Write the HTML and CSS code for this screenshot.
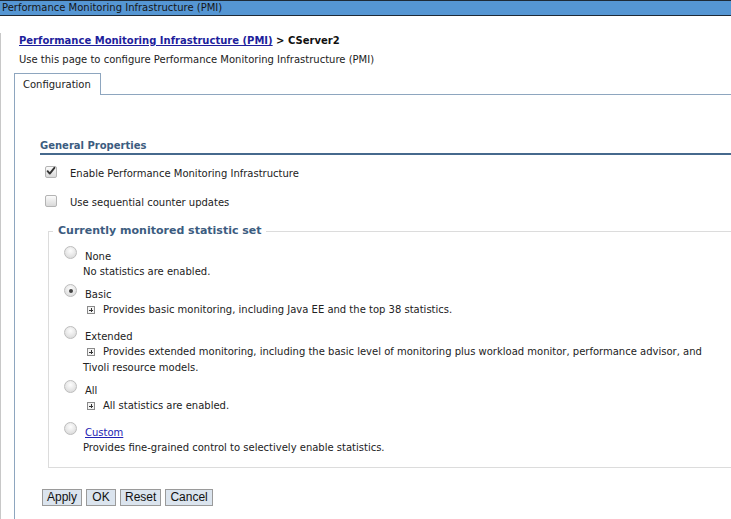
FILE: index.html
```html
<!DOCTYPE html>
<html>
<head>
<meta charset="utf-8">
<link rel="stylesheet" href="styles.css">
</head>
<body>
<div class="titlebar">Performance Monitoring Infrastructure (PMI)</div>
<div class="main">
  <div class="crumb"><a href="#" class="crumb-link">Performance Monitoring Infrastructure (PMI)</a> &gt; CServer2</div>
  <div class="intro">Use this page to configure Performance Monitoring Infrastructure (PMI)</div>
  <div class="tabs">
    <div class="tab">Configuration</div>
    <div class="tabfill"></div>
  </div>
  <div class="panel">
    <div class="section-title">General Properties</div>
    <div class="cbrow"><span class="cb"><svg class="check" viewBox="0 0 12 12" width="12" height="12"><path d="M2.6 6.2 L4.8 8.6 L9.4 2.8" fill="none" stroke="#333" stroke-width="1.9" stroke-linecap="round" stroke-linejoin="round"/></svg></span><span class="cblabel">Enable Performance Monitoring Infrastructure</span></div>
    <div class="cbrow second"><span class="cb"></span><span class="cblabel">Use sequential counter updates</span></div>
    <fieldset class="set">
      <legend class="legend">Currently monitored statistic set</legend>
      <div class="opt first">
        <div class="opt-head"><span class="radio"></span><span class="optlabel">None</span></div>
        <div class="opt-desc">No statistics are enabled.</div>
      </div>
      <div class="opt">
        <div class="opt-head"><span class="radio on"></span><span class="optlabel">Basic</span></div>
        <div class="opt-desc plusrow tall"><span class="plus"></span>Provides basic monitoring, including Java EE and the top 38 statistics.</div>
      </div>
      <div class="opt">
        <div class="opt-head"><span class="radio"></span><span class="optlabel">Extended</span></div>
        <div class="opt-desc plusrow"><span class="plus"></span>Provides extended monitoring, including the basic level of monitoring plus workload monitor, performance advisor, and</div>
        <div class="opt-desc">Tivoli resource models.</div>
      </div>
      <div class="opt">
        <div class="opt-head"><span class="radio"></span><span class="optlabel">All</span></div>
        <div class="opt-desc plusrow tall"><span class="plus"></span>All statistics are enabled.</div>
      </div>
      <div class="opt">
        <div class="opt-head"><span class="radio"></span><a href="#" class="optlabel link">Custom</a></div>
        <div class="opt-desc">Provides fine-grained control to selectively enable statistics.</div>
      </div>
    </fieldset>
    <div class="buttons">
      <button class="btn">Apply</button>
      <button class="btn">OK</button>
      <button class="btn">Reset</button>
      <button class="btn">Cancel</button>
    </div>
  </div>
</div>
</body>
</html>
```
FILE: styles.css
```css
html, body {
  margin: 0;
  padding: 0;
  background: #fff;
  overflow: hidden;
}
body {
  font-family: "DejaVu Sans", Verdana, sans-serif;
  font-size: 10px;
  color: #222;
  width: 731px;
  height: 519px;
}
.titlebar {
  height: 14px;
  line-height: 14px;
  background: #5596d3;
  border-top: 1px solid #1e2a36;
  border-bottom: 1px solid #1e2a36;
  padding-left: 2px;
  color: #151515;
  white-space: nowrap;
}
.main {
  border-left: 1px solid #c8c8c8;
  height: 503px;
}
.crumb {
  margin: 17px 0 0 18px;
  line-height: 16px;
  font-weight: bold;
  color: #111;
}
.crumb-link {
  color: #1e1e9c;
  text-decoration: underline;
}
.intro {
  margin: 3px 0 0 18px;
  line-height: 16px;
}
.tabs {
  display: flex;
  margin: 5px 0 0 13px;
  height: 22px;
}
.tab {
  width: 77px;
  padding-left: 8px;
  border: 1px solid #8ea6bf;
  border-bottom: none;
  line-height: 21px;
}
.tabfill {
  flex: 1;
  border-bottom: 1px solid #8ea6bf;
}
.panel {
  margin-left: 13px;
  border-left: 1px solid #8ea6bf;
  padding-left: 25px;
  height: 425px;
}
.section-title {
  padding-top: 44px;
  line-height: 14px;
  font-weight: bold;
  color: #3c5c80;
  border-bottom: 2px solid #46698d;
}
.cbrow {
  display: flex;
  align-items: center;
  margin-top: 10px;
  height: 16px;
}
.cbrow.second {
  margin-top: 13px;
}
.cb {
  box-sizing: border-box;
  width: 12px;
  height: 12px;
  margin: -3px 0 0 5px;
  border: 1px solid #b4b4b4;
  border-radius: 2px;
  background: linear-gradient(#fbfbfb, #d9d9d9);
  position: relative;
}
.check {
  position: absolute;
  left: -1px;
  top: -2px;
}
.cblabel {
  margin-left: 13px;
}
.set {
  margin: 13px -20px 0 8px;
  padding: 10px 0 11px 15px;
  border: 1px solid #dcdcdc;
}
.legend {
  padding: 0 4px 0 5px;
  margin-left: -11px;
  font-size: 11px;
  line-height: 16px;
  font-weight: bold;
  color: #3c5c80;
}
.opt {
  margin-top: 7px;
}
.opt.first {
  margin-top: 0;
}
.opt-head {
  display: flex;
  align-items: center;
  height: 15px;
}
.radio {
  width: 13px;
  height: 13px;
  box-sizing: border-box;
  border-radius: 50%;
  border: 1px solid #bdbdbd;
  background: radial-gradient(circle at 50% 35%, #fdfdfd, #d4d4d4);
  margin-top: -8px;
  position: relative;
}
.radio.on::after {
  content: "";
  position: absolute;
  left: 3.5px;
  top: 3.5px;
  width: 4px;
  height: 4px;
  border-radius: 50%;
  background: #444;
}
.optlabel {
  margin-left: 8px;
}
.link {
  color: #2222b4;
  text-decoration: underline;
}
.opt-desc {
  line-height: 16px;
  margin-left: 19px;
  white-space: nowrap;
}
.opt-desc.tall {
  padding-bottom: 4px;
}
.plusrow {
  display: flex;
  align-items: center;
}
.plus {
  width: 8px;
  height: 8px;
  box-sizing: border-box;
  border: 1px solid #8a8a8a;
  background:
    linear-gradient(#333, #333) center / 4px 1px no-repeat,
    linear-gradient(#333, #333) center / 1px 4px no-repeat,
    #f4f4f4;
  margin: 0 8px 0 4px;
}
.buttons {
  display: flex;
  gap: 4px;
  margin: 21px 0 0 2px;
}
.btn {
  font-family: "Liberation Sans", Arial, sans-serif;
  font-size: 12px;
  height: 17px;
  min-width: 30px;
  padding: 0 4px;
  line-height: 15px;
  background: #dbe4ee;
  border: 1px solid #9a9a9a;
  border-radius: 0;
  color: #111;
}
```
